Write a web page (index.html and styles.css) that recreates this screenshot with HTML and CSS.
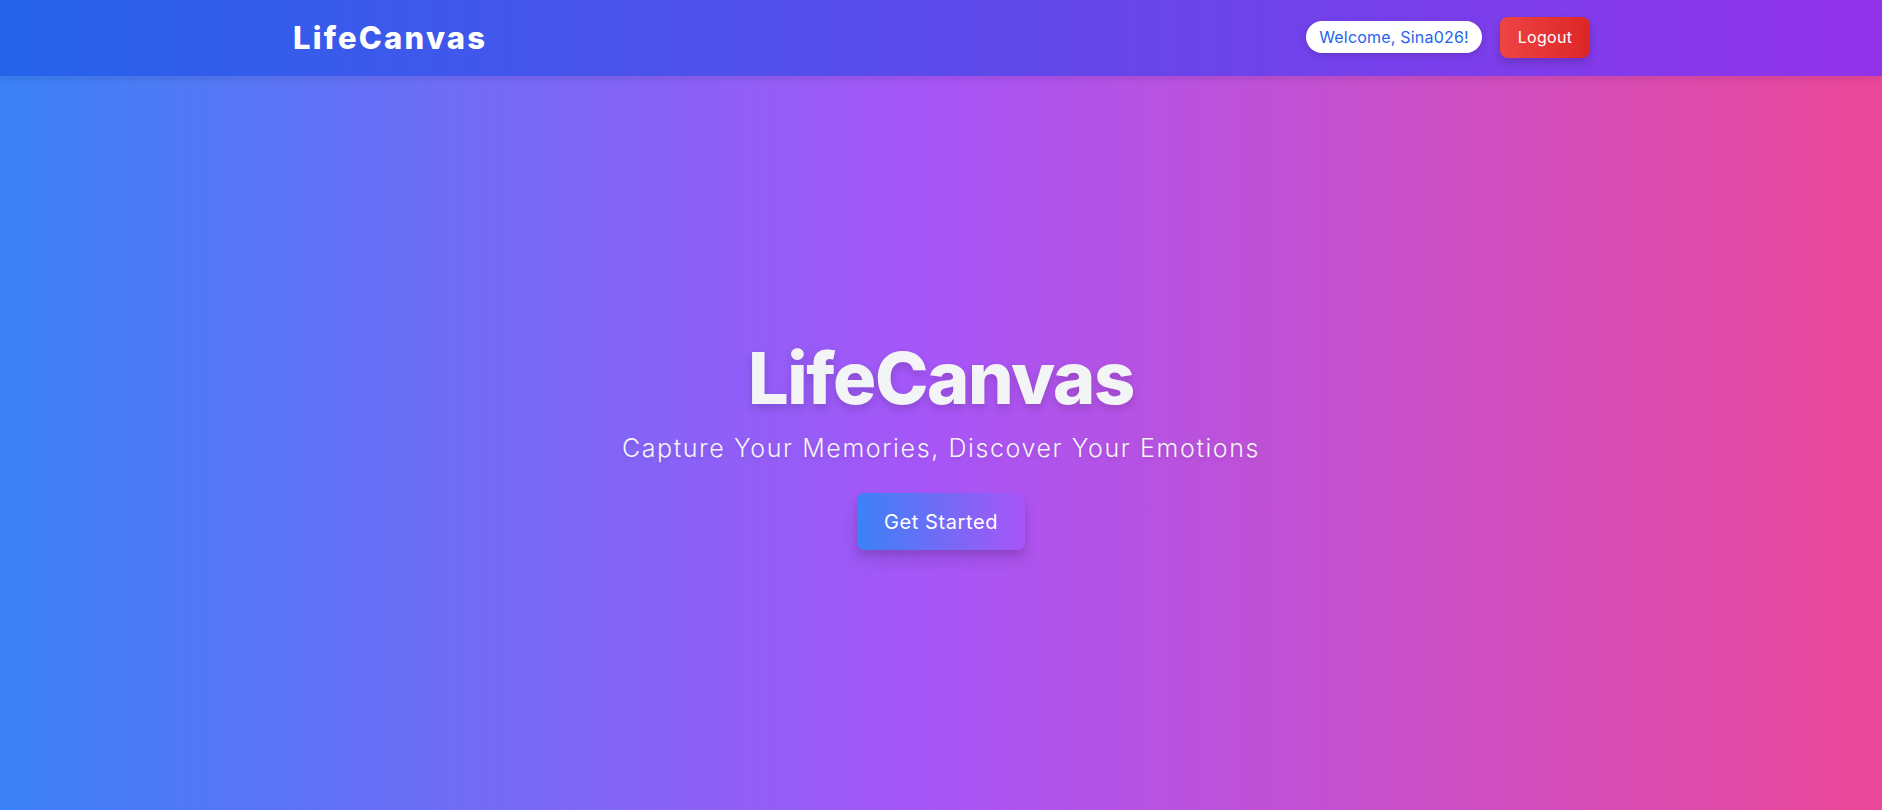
FILE: index.html
```html
<!DOCTYPE html>
<html lang="en">
<head>
<meta charset="utf-8">
<title>LifeCanvas</title>
<link rel="stylesheet" href="styles.css">
</head>
<body>
<header class="topbar">
  <div class="topbar-inner">
    <div class="brand">LifeCanvas</div>
    <div class="user-area">
      <span class="welcome">Welcome, Sina026!</span>
      <button class="logout">Logout</button>
    </div>
  </div>
</header>
<main class="hero">
  <h1 class="hero-title">LifeCanvas</h1>
  <p class="hero-sub">Capture Your Memories, Discover Your Emotions</p>
  <button class="cta">Get Started</button>
</main>
</body>
</html>
```
FILE: styles.css
```css
* { box-sizing: border-box; }
html, body { margin: 0; padding: 0; height: 100%; }
body {
  font-family: Inter, "Open Sans", sans-serif;
  background: linear-gradient(to right, #3b82f6, #a855f7, #ec4899);
  display: flex;
  flex-direction: column;
  min-height: 100vh;
  color: #fff;
}
.topbar {
  height: 76px;
  background: linear-gradient(to right, #2563eb, #9333ea);
  box-shadow: 0 4px 6px rgba(0,0,0,0.08);
}
.topbar-inner {
  height: 100%;
  margin: 0 auto;
  width: 1298px;
  display: flex;
  align-items: center;
  justify-content: space-between;
}
.brand {
  font-size: 31px;
  font-weight: 800;
  letter-spacing: 2.2px;
  color: #fff;
  padding-left: 1px;
  padding-bottom: 2px;
}
.user-area {
  display: flex;
  align-items: center;
  gap: 18px;
  padding-bottom: 2px;
}
.welcome {
  background: #fff;
  color: #2563eb;
  border-radius: 999px;
  height: 32px;
  width: 176px;
  display: flex;
  align-items: center;
  justify-content: center;
  font-size: 16px;
  letter-spacing: 0.2px;
  box-shadow: 0 2px 6px rgba(0,0,0,0.15);
}
.logout {
  font-family: inherit;
  border: 0;
  width: 90px;
  height: 41px;
  border-radius: 8px;
  background: linear-gradient(to right, #ef4444, #dc2626);
  color: #fff;
  font-size: 16px;
  letter-spacing: 0.3px;
  box-shadow: 0 4px 8px rgba(0,0,0,0.18);
}
.hero {
  flex: 1;
  display: flex;
  flex-direction: column;
  align-items: center;
  justify-content: center;
  padding-top: 6px;
}
.hero-title {
  margin: 0;
  font-size: 72px;
  line-height: 72px;
  font-weight: 800;
  letter-spacing: -1.4px;
  color: #f3f4f6;
  text-shadow: 0 4px 8px rgba(0,0,0,0.15);
}
.hero-sub {
  margin: 18px 0 29px;
  font-size: 25px;
  line-height: 32px;
  font-weight: 300;
  letter-spacing: 1.6px;
  color: #f3f4f6;
  text-shadow: 0 2px 4px rgba(0,0,0,0.1);
}
.cta {
  font-family: inherit;
  border: 0;
  width: 168px;
  height: 57px;
  border-radius: 8px;
  background: linear-gradient(to right, #3b82f6, #a855f7);
  color: #fff;
  font-size: 20px;
  letter-spacing: 0.6px;
  box-shadow: 0 10px 15px rgba(0,0,0,0.12), 0 4px 6px rgba(0,0,0,0.08);
}
```
